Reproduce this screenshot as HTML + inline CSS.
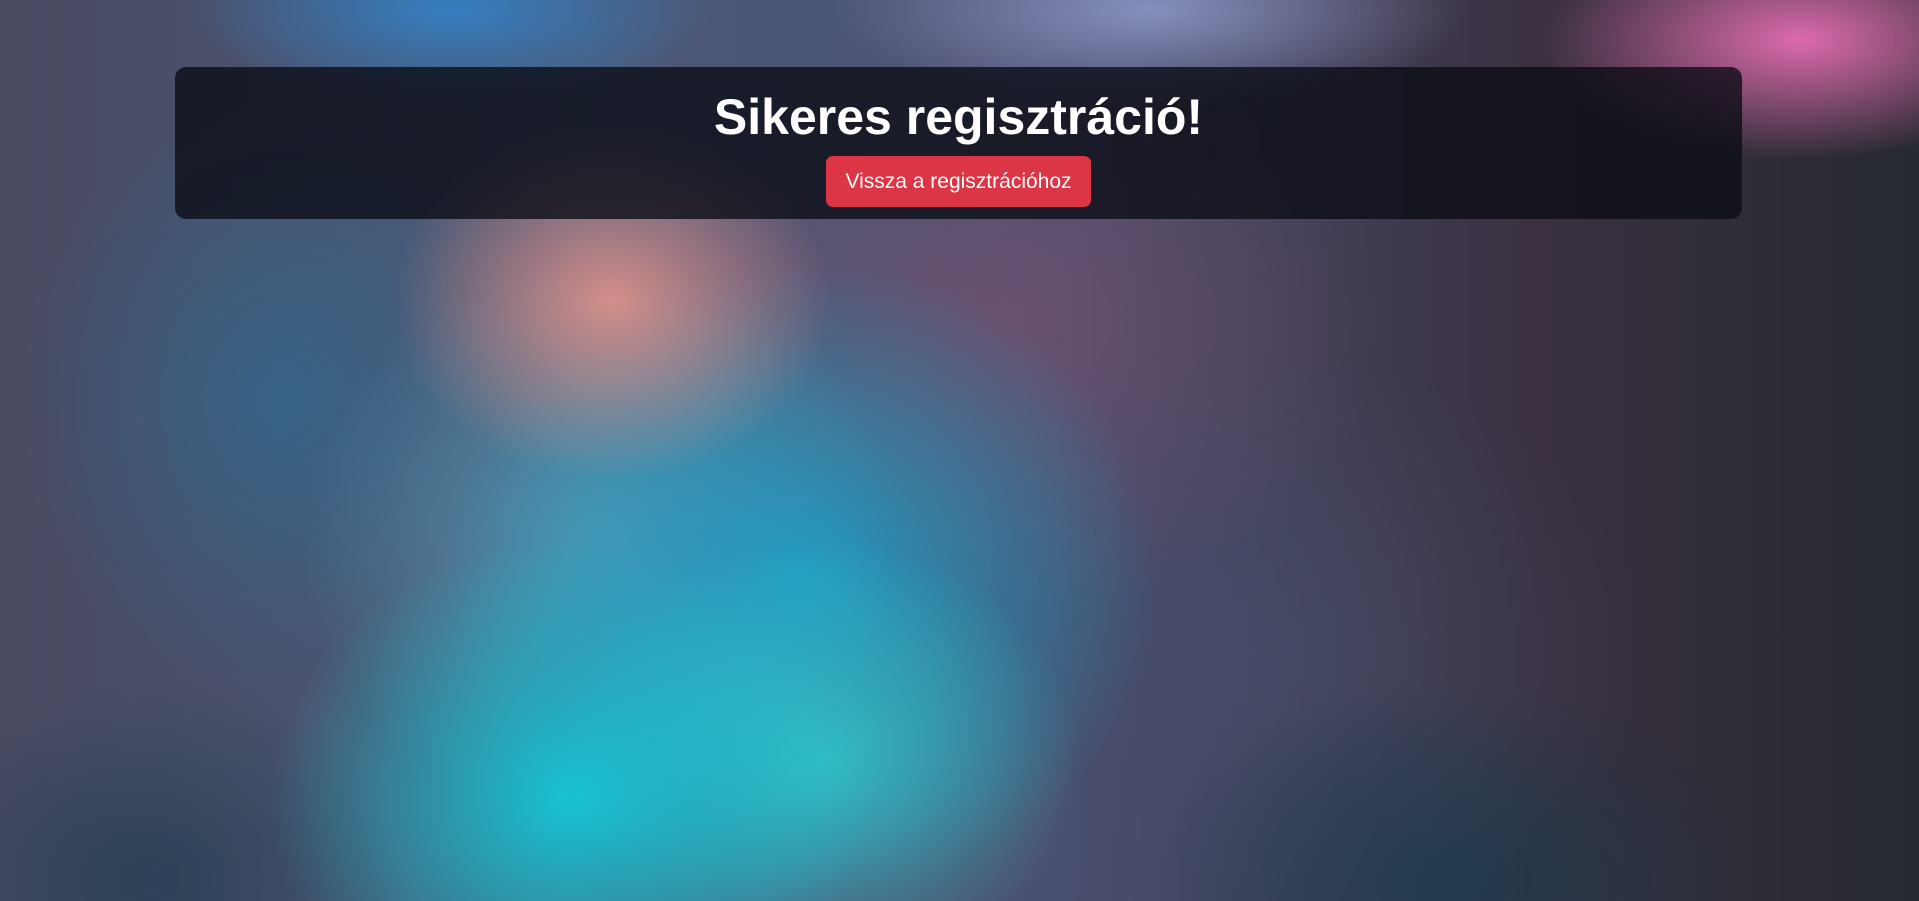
<!DOCTYPE html>
<html><head><meta charset="utf-8"><style>
html,body{margin:0;padding:0;width:1919px;height:901px;overflow:hidden}
body{font-family:"Liberation Sans",sans-serif;position:relative;
background:
radial-gradient(ellipse 220px 180px at 612px 300px, rgba(235,150,140,.85), rgba(235,150,140,0) 100%),
radial-gradient(ellipse 300px 260px at 570px 800px, rgba(20,200,215,.95), rgba(20,200,215,0) 100%),
radial-gradient(ellipse 260px 220px at 820px 760px, rgba(50,200,205,.85), rgba(50,200,205,0) 100%),
radial-gradient(ellipse 360px 320px at 800px 580px, rgba(25,165,205,.85), rgba(25,165,205,0) 100%),
radial-gradient(ellipse 300px 280px at 600px 540px, rgba(90,175,200,.65), rgba(90,175,200,0) 100%),
radial-gradient(ellipse 260px 300px at 280px 400px, rgba(40,110,150,.6), rgba(40,110,150,0) 100%),
radial-gradient(ellipse 260px 200px at 150px 880px, rgba(30,60,80,.7), rgba(30,60,80,0) 100%),
radial-gradient(ellipse 300px 200px at 1450px 880px, rgba(20,60,80,.7), rgba(20,60,80,0) 100%),
radial-gradient(ellipse 260px 120px at 1800px 40px, rgba(230,110,180,.95), rgba(230,110,180,0) 100%),
radial-gradient(ellipse 260px 100px at 450px 10px, rgba(50,130,200,.9), rgba(50,130,200,0) 100%),
radial-gradient(ellipse 320px 100px at 1150px 10px, rgba(150,160,210,.8), rgba(150,160,210,0) 100%),
radial-gradient(ellipse 380px 300px at 1000px 320px, rgba(130,80,110,.55), rgba(130,80,110,0) 100%),
radial-gradient(ellipse 400px 300px at 1250px 650px, rgba(70,80,110,.55), rgba(70,80,110,0) 100%),
linear-gradient(90deg,#4a4a62 0%,#4c5a78 30%,#4a5070 55%,#3a3040 80%,#262a30 100%);}
.card{position:absolute;left:175px;top:67px;width:1567px;height:152px;border-radius:11px;background:rgba(10,12,20,.78);text-align:center}
h1{margin:0;padding-top:18px;color:#fff;font-size:50px;font-weight:bold;line-height:64px;letter-spacing:0}
.btn{display:inline-block;margin-top:7px;background:#dc3545;color:#fff;font-size:21px;line-height:51px;height:51px;width:265px;border-radius:7px}
</style></head><body>
<div class="card"><h1>Sikeres regisztráció!</h1><span class="btn">Vissza a regisztrációhoz</span></div>
</body></html>
